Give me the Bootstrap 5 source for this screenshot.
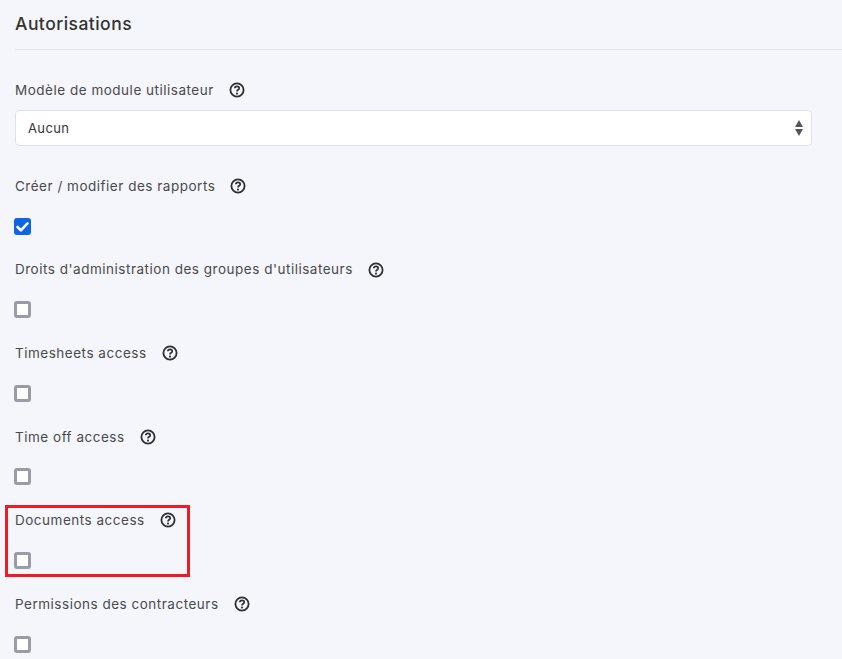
<!DOCTYPE html>
<html lang="fr"><head><meta charset="utf-8"><title>Autorisations</title>
<link href="https://cdn.jsdelivr.net/npm/bootstrap@5.3.0/dist/css/bootstrap.min.css" rel="stylesheet">
<style>
html,body{height:659px;overflow:hidden}
body{background:#f4f6fb;color:#3d3d3d;font-family:Inter,"Liberation Sans",sans-serif;font-size:13px;position:relative}
.page-wrap{padding:14px 0 0 15px}
.sec-title{font-size:17.5px;font-weight:500;letter-spacing:.47px;line-height:20px;margin:0;padding-bottom:15px;border-bottom:1px solid #e3e5ea;color:#333}
.perm-first{margin-top:31px}
.perm-label{display:flex;align-items:center;gap:15px;height:18px;margin:0;font-size:13.5px;letter-spacing:.51px;color:#4a4a4a}
.perm-select{width:797px;height:36px;margin-top:11px;font-size:13px;padding:2px 12px 0;border:1px solid #dfe1e6;border-radius:4px;color:#333;letter-spacing:.4px;background-color:#fff;background-image:url("data:image/svg+xml,%3Csvg xmlns='http://www.w3.org/2000/svg' width='10' height='16'%3E%3Cpath fill='%23555' d='M5 0l4 7H1zM5 16L1 9h8z'/%3E%3C/svg%3E");background-repeat:no-repeat;background-position:right 7px center;background-size:10px 16px}
.perm-item{margin-top:31px}
.perm-row{height:83.6px}
.perm-row .perm-check{margin-top:22.6px}
.perm-check{display:block;width:17px;height:17px;margin:0 0 0 -1px;border:3px solid #9a9ba6;border-radius:3px;background:#fff;appearance:none;-webkit-appearance:none}
.perm-check:checked{background:#0d65e5 url("data:image/svg+xml,%3Csvg xmlns='http://www.w3.org/2000/svg' viewBox='0 0 17 17'%3E%3Cpath fill='none' stroke='%23fff' stroke-width='2.6' stroke-linecap='round' stroke-linejoin='round' d='M3.5 9l3.4 3.4 6.6-7'/%3E%3C/svg%3E") center/17px 17px no-repeat;border:0}
.hint{flex:none;width:16px;height:16px;display:block}
.red-mark{position:absolute;left:5px;top:505px;width:185px;height:72px;border:3px solid #ed1c24;pointer-events:none}
</style></head>
<body>
<svg width="0" height="0" class="d-block position-absolute"><symbol id="qm" viewBox="0 0 16 16"><circle cx="8" cy="8" r="6.6" fill="none" stroke="#2f2f2f" stroke-width="1.8"/><path d="M5.8 6.3C5.9 5 6.9 4.3 8 4.3c1.3 0 2.2.8 2.2 1.9 0 1.6-2.2 1.6-2.2 3.2" fill="none" stroke="#2f2f2f" stroke-width="1.7"/><circle cx="8" cy="11.6" r="1.05" fill="#2f2f2f"/></symbol></svg>
<div class="page-wrap">
  <h5 class="sec-title">Autorisations</h5>
  <div class="perm-first">
    <label class="perm-label">Modèle de module utilisateur <svg class="hint"><use href="#qm"/></svg></label>
    <select class="form-select perm-select"><option>Aucun</option></select>
  </div>
  <div class="perm-item perm-row">
    <label class="perm-label">Créer / modifier des rapports <svg class="hint"><use href="#qm"/></svg></label>
    <input class="perm-check" type="checkbox" checked>
  </div>
  <div class="perm-row">
    <label class="perm-label">Droits d'administration des groupes d'utilisateurs <svg class="hint"><use href="#qm"/></svg></label>
    <input class="perm-check" type="checkbox">
  </div>
  <div class="perm-row">
    <label class="perm-label">Timesheets access <svg class="hint"><use href="#qm"/></svg></label>
    <input class="perm-check" type="checkbox">
  </div>
  <div class="perm-row">
    <label class="perm-label">Time off access <svg class="hint"><use href="#qm"/></svg></label>
    <input class="perm-check" type="checkbox">
  </div>
  <div class="perm-row">
    <label class="perm-label">Documents access <svg class="hint"><use href="#qm"/></svg></label>
    <input class="perm-check" type="checkbox">
  </div>
  <div class="perm-row">
    <label class="perm-label">Permissions des contracteurs <svg class="hint"><use href="#qm"/></svg></label>
    <input class="perm-check" type="checkbox">
  </div>
</div>
<div class="red-mark"></div>
<script src="https://cdn.jsdelivr.net/npm/bootstrap@5.3.0/dist/js/bootstrap.bundle.min.js"></script>
</body></html>
